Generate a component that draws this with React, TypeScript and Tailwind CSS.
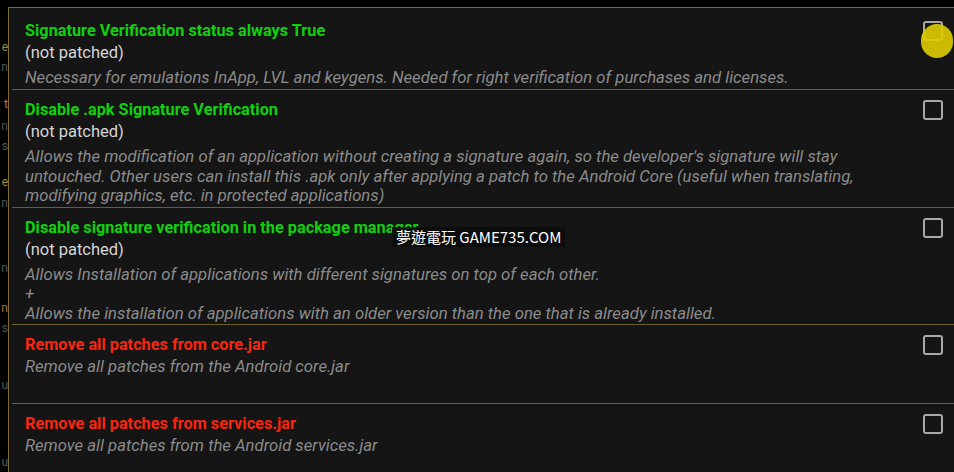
import React from 'react';

type Patch = {
  title: string;
  color: 'green' | 'red';
  status?: string;
  desc: string[];
  highlight?: boolean;
};

const PATCHES: Patch[] = [
  {
    title: 'Signature Verification status always True',
    color: 'green',
    status: '(not patched)',
    desc: ['Necessary for emulations InApp, LVL and keygens. Needed for right verification of purchases and licenses.'],
    highlight: true,
  },
  {
    title: 'Disable .apk Signature Verification',
    color: 'green',
    status: '(not patched)',
    desc: [
      "Allows the modification of an application without creating a signature again, so the developer's signature will stay",
      'untouched. Other users can install this .apk only after applying a patch to the Android Core (useful when translating,',
      'modifying graphics, etc. in protected applications)',
    ],
  },
  {
    title: 'Disable signature verification in the package manager',
    color: 'green',
    status: '(not patched)',
    desc: [
      'Allows Installation of applications with different signatures on top of each other.',
      '+',
      'Allows the installation of applications with an older version than the one that is already installed.',
    ],
  },
  {
    title: 'Remove all patches from core.jar',
    color: 'red',
    desc: ['Remove all patches from the Android core.jar'],
  },
  {
    title: 'Remove all patches from services.jar',
    color: 'red',
    desc: ['Remove all patches from the Android services.jar'],
  },
];

// bits of the screen behind the dialog, peeking out on the left
const BEHIND: { h: string; text: string; cls: string }[] = [
  { h: 'h-[38px]', text: '', cls: '' },
  { h: 'h-[20px]', text: 'e', cls: 'text-[#a08a3a]' },
  { h: 'h-[22px]', text: 'n', cls: 'text-[#555]' },
  { h: 'h-[16px]', text: '', cls: '' },
  { h: 'h-[22px]', text: 't', cls: 'text-[#a08a3a]' },
  { h: 'h-[20px]', text: 'n', cls: 'text-[#555]' },
  { h: 'h-[20px]', text: 's', cls: 'text-[#555]' },
  { h: 'h-[16px]', text: '', cls: '' },
  { h: 'h-[22px]', text: 'e', cls: 'text-[#a08a3a]' },
  { h: 'h-[20px]', text: 'n', cls: 'text-[#555]' },
  { h: 'h-[46px]', text: '', cls: '' },
  { h: 'h-[20px]', text: 'n', cls: 'text-[#555]' },
  { h: 'h-[20px]', text: '', cls: '' },
  { h: 'h-[20px]', text: 'n', cls: 'text-[#b06a20]' },
  { h: 'h-[20px]', text: 's', cls: 'text-[#555]' },
  { h: 'h-[38px]', text: '', cls: '' },
  { h: 'h-[20px]', text: 'u', cls: 'text-[#555]' },
  { h: 'h-[58px]', text: '', cls: '' },
  { h: 'h-[20px]', text: 'u', cls: 'text-[#555]' },
];

function Checkbox() {
  return <div className="w-[20px] h-[20px] border-2 border-[#a9a9a9] rounded-[3px] shrink-0" />;
}

function PatchRow({ patch }: { patch: Patch }) {
  return (
    <div className="relative flex items-start min-h-[79px] border-b border-[#6f5c2c] pl-[13px] pr-[11px] pt-[10px] pb-[1px]">
      <div className="flex-1 min-w-0">
        <div
          className={
            'text-[16.3px] leading-[20px] font-bold ' +
            (patch.color === 'green' ? 'text-[#10d010]' : 'text-[#f7260f]')
          }
        >
          {patch.title}
        </div>
        {patch.status && (
          <div className="text-[16.5px] leading-[24px] text-[#d6d6d6] mb-[3px]">{patch.status}</div>
        )}
        <div className={'text-[16.7px] leading-[19.5px] italic text-[#8b8b8b] ' + (patch.status ? '' : 'mt-[2px]')}>
          {patch.desc.map((line, i) => (
            <div key={i} className="whitespace-nowrap">
              {line}
            </div>
          ))}
        </div>
      </div>
      <Checkbox />
      {patch.highlight && (
        <div className="absolute right-[1px] top-[13px] w-[32px] h-[34px] rounded-full bg-[#e0cc00] opacity-90" />
      )}
    </div>
  );
}

export default function App() {
  return (
    <div
      className="relative w-[954px] h-[472px] overflow-hidden bg-black flex"
      style={{ fontFamily: 'Roboto, "Noto Sans", sans-serif' }}
    >
      {/* background app behind the dialog */}
      <div className="w-[8px] shrink-0 overflow-hidden flex flex-col text-[12px] leading-[20px]">
        {BEHIND.map((b, i) => (
          <div key={i} className={'flex justify-end whitespace-nowrap ' + b.h + ' ' + b.cls}>
            {b.text}
          </div>
        ))}
      </div>

      {/* dialog */}
      <div className="flex-1 mt-[7px] bg-[#151515] border-t border-l border-[#7d6a34] pt-[3px] pl-[3px]">
        {PATCHES.map((p) => (
          <PatchRow key={p.title} patch={p} />
        ))}
      </div>

      {/* watermark */}
      <div
        className="absolute left-[392px] top-[227px] h-[20px] px-[4px] bg-[#0b0b0b]/90 text-white text-[15px] leading-[20px] whitespace-nowrap"
        style={{ fontFamily: '"Noto Sans CJK TC", "Noto Sans", sans-serif' }}
      >
        夢遊電玩 GAME735.COM
      </div>
    </div>
  );
}
